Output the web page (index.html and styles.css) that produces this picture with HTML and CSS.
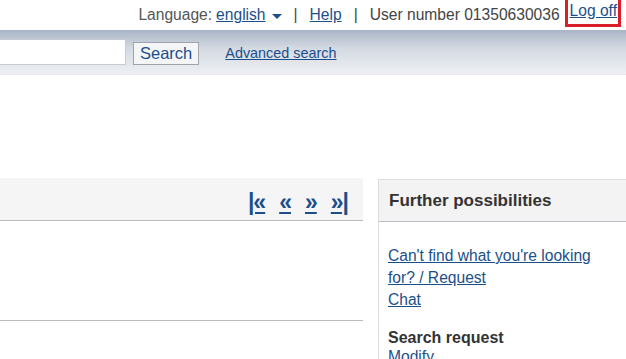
FILE: index.html
```html
<!DOCTYPE html>
<html lang="en">
<head>
    <meta charset="UTF-8">
    <title>Catalogue</title>
    <link rel="stylesheet" href="styles.css">
</head>
<body>
    <div class="top-bar">
        <span class="label">Language:</span>
        <a href="#" class="lang">english</a>
        <span class="caret"></span>
        <span class="sep">|</span>
        <a href="#">Help</a>
        <span class="sep">|</span>
        <span class="user">User number 01350630036</span>
        <a href="#" class="logoff">Log off</a>
    </div>

    <div class="search-band">
        <input type="text" class="search-input">
        <button class="search-button">Search</button>
        <a href="#" class="advanced">Advanced search</a>
    </div>

    <div class="content">
        <div class="results">
            <div class="results-header">
                <div class="pager">
                    <a href="#">|&laquo;</a>
                    <a href="#">&laquo;</a>
                    <a href="#">&raquo;</a>
                    <a href="#">&raquo;|</a>
                </div>
            </div>
            <div class="results-body"></div>
        </div>

        <div class="sidebar">
            <h3>Further possibilities</h3>
            <div class="sidebar-links">
                <a href="#">Can't find what you're looking for? / Request</a>
                <a href="#">Chat</a>
            </div>
            <h4>Search request</h4>
            <a href="#" class="modify">Modify</a>
        </div>
    </div>
</body>
</html>
```

FILE: styles.css
```css
/* General */
body {
    margin: 0;
    width: 626px;
    height: 359px;
    overflow: hidden;
    font-family: 'Liberation Sans', Arial, sans-serif;
    color: #333;
    background-color: #fff;
}

a {
    color: #1b4f8a;
}

/* Top bar */
.top-bar {
    height: 30px;
    display: flex;
    align-items: center;
    justify-content: flex-end;
    padding-right: 5px;
    font-size: 15.6px;
    color: #444;
}

.top-bar .label {
    color: #555;
    margin-right: 4px;
}

.caret {
    width: 0;
    height: 0;
    border-left: 5px solid transparent;
    border-right: 5px solid transparent;
    border-top: 5px solid #1b4f8a;
    margin: 2px 0 0 6px;
}

.sep {
    margin: 0 12px 0 12px;
    color: #444;
}

.user {
    margin-right: 5px;
}

.logoff {
    border: 3px solid #d81f2a;
    border-top: none;
    padding: 2px 1px 4px 2px;
    margin-top: -3px;
}

/* Search band */
.search-band {
    height: 44px;
    display: flex;
    align-items: center;
    background: linear-gradient(to bottom, #a8b4c6 0%, #d3d9e2 40%, #eef0f3 100%);
    border-bottom: 1px solid #e8e8e8;
}

.search-input {
    width: 126px;
    height: 26px;
    box-sizing: border-box;
    border: 1px solid #c8ccd2;
    border-left: none;
    margin: 0 7px 0 0;
    background-color: #fff;
}

.search-button {
    font-family: 'Liberation Sans', Arial, sans-serif;
    font-size: 16.5px;
    color: #1b4f8a;
    background-color: #f4f5f7;
    border: 1px solid #a0a4aa;
    padding: 1px 6px;
    height: 23px;
    margin: 3px 26px 0 0;
}

.advanced {
    font-size: 14.4px;
    margin-top: 2px;
}

/* Content */
.content {
    display: flex;
    margin-top: 103px;
}

.results {
    width: 363px;
}

.results-header {
    height: 42px;
    background-color: #f5f5f5;
    border-bottom: 1px solid #bbb;
    display: flex;
    justify-content: flex-end;
    align-items: center;
}

.pager {
    display: flex;
    gap: 14px;
    margin: 7px 15px 0 0;
}

.pager a {
    font-size: 23px;
    font-weight: bold;
    color: #1b4f8a;
    letter-spacing: -1px;
}

.results-body {
    height: 99px;
    border-bottom: 1px solid #bbb;
}

.sidebar {
    margin-left: 15px;
    flex: 1;
    border-left: 1px solid #ddd;
    border-top: 1px solid #ddd;
    margin-top: 1px;
}

.sidebar h3 {
    margin: 0;
    height: 41px;
    line-height: 41px;
    padding-left: 10px;
    font-size: 17px;
    background-color: #f3f3f3;
    border-bottom: 1px solid #b9bdc6;
}

.sidebar-links {
    width: 215px;
    padding: 23px 0 0 9px;
    font-size: 15.6px;
    line-height: 22px;
}

.sidebar-links a {
    display: block;
}

.sidebar h4 {
    margin: 17px 0 0 9px;
    font-size: 16px;
    line-height: 20px;
}

.modify {
    display: block;
    margin-left: 9px;
    font-size: 15.6px;
}
```
